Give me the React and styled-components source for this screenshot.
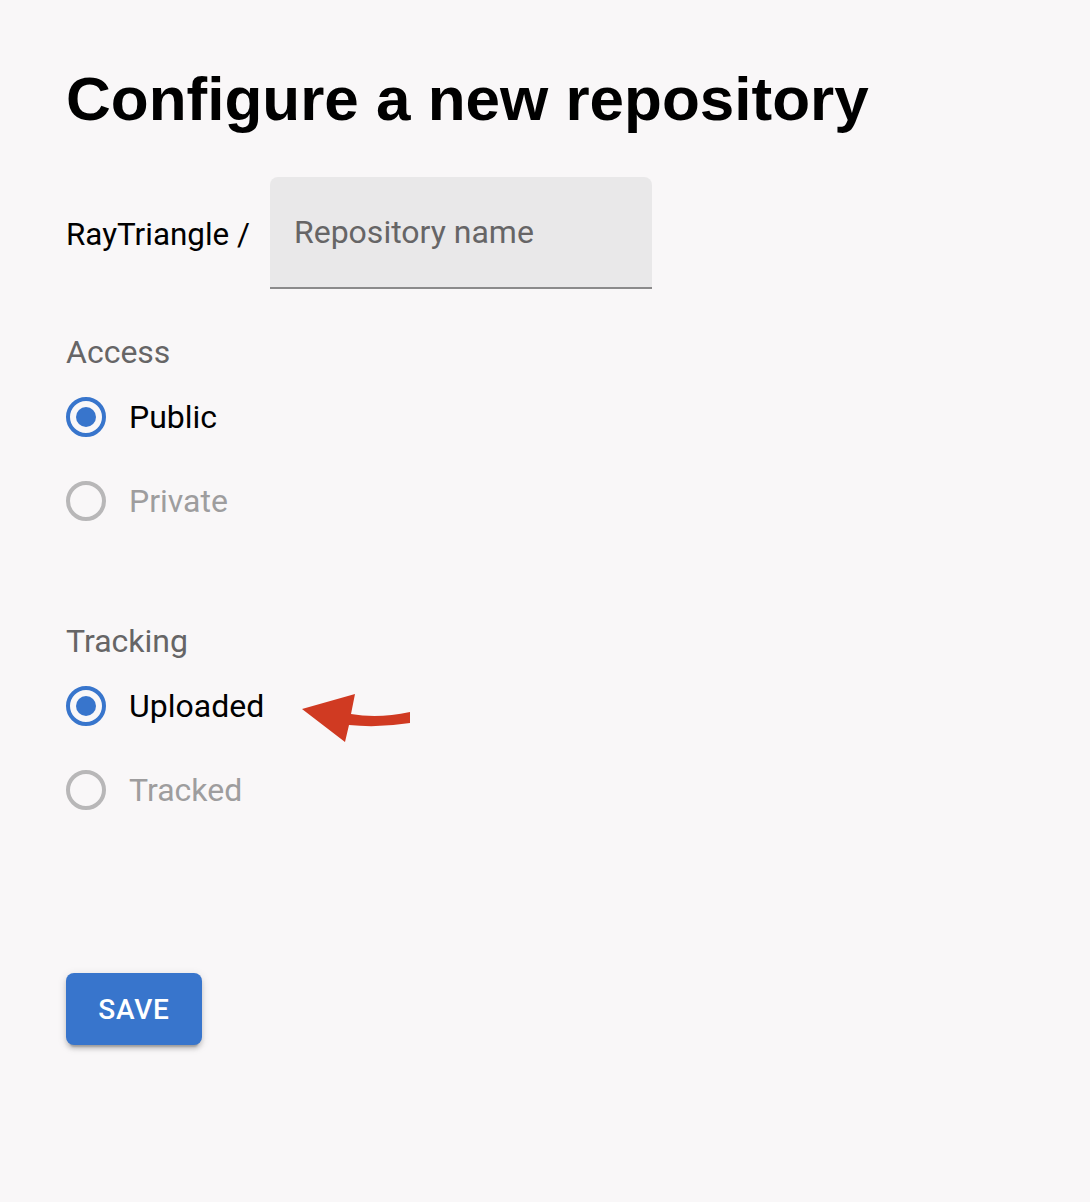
import React, { useState } from 'react';
import styled, { createGlobalStyle } from 'styled-components';

const GlobalStyle = createGlobalStyle`
  html, body {
    margin: 0;
    padding: 0;
    background: #f9f7f8;
  }
  body {
    font-family: Roboto, "Liberation Sans", Arial, sans-serif;
    color: #000;
  }
`;

const Page = styled.div`
  min-height: 1202px;
  padding: 62px 0 0 66px;
  box-sizing: border-box;
  background: #f9f7f8;
`;

const Title = styled.h1`
  margin: 0;
  font-family: "Liberation Sans", Arial, sans-serif;
  font-weight: 700;
  font-size: 62px;
  line-height: 74px;
  color: #000;
`;

const NameRow = styled.div`
  display: flex;
  align-items: center;
  gap: 20px;
  margin-top: 41px;
`;

const Owner = styled.span`
  font-size: 31.4px;
  line-height: 46px;
  color: #000;
  padding-top: 4px;
`;

const FilledField = styled.label`
  width: 382px;
  height: 112px;
  box-sizing: border-box;
  display: flex;
  align-items: center;
  padding: 0 24px;
  background: #e9e8e9;
  border-radius: 8px 8px 0 0;
  border-bottom: 2px solid #8b8a8b;
  cursor: text;

  input {
    width: 100%;
    border: 0;
    outline: 0;
    background: transparent;
    font-family: Roboto, sans-serif;
    font-size: 32px;
    color: #000;
    padding: 0;
  }
  input::placeholder {
    color: #666566;
    opacity: 1;
  }
`;

const Group = styled.fieldset`
  border: 0;
  margin: ${(p) => p.$top}px 0 0;
  padding: 0;
  min-width: 0;
`;

const GroupLabel = styled.legend`
  padding: 0;
  font-size: 32px;
  line-height: 46px;
  color: #666566;
`;

const Option = styled.label`
  position: relative;
  display: flex;
  align-items: center;
  height: 84px;
  gap: 23px;
  font-size: 32px;
  color: ${(p) => (p.$disabled ? '#9e9d9e' : '#000')};
  cursor: ${(p) => (p.$disabled ? 'default' : 'pointer')};

  input {
    display: none;
  }
`;

const Circle = styled.span`
  width: 40px;
  height: 40px;
  box-sizing: border-box;
  border-radius: 50%;
  border: 4px solid
    ${(p) => (p.$disabled ? '#b8b7b8' : p.$checked ? '#3875cc' : '#8b8a8b')};
  display: flex;
  align-items: center;
  justify-content: center;
  flex: none;

  &::after {
    content: '';
    width: 20px;
    height: 20px;
    border-radius: 50%;
    background: #3875cc;
    transform: scale(${(p) => (p.$checked ? 1 : 0)});
  }
`;

const Arrow = styled.svg`
  position: absolute;
  left: 232px;
  top: 26px;
  width: 116px;
  height: 56px;
`;

const SaveButton = styled.button`
  margin-top: 141px;
  width: 136px;
  height: 72px;
  border: 0;
  border-radius: 8px;
  background: #3875cc;
  color: #fff;
  font-family: Roboto, sans-serif;
  font-weight: 500;
  font-size: 28px;
  letter-spacing: 0.8px;
  text-transform: uppercase;
  box-shadow: 0 6px 2px -4px rgba(0, 0, 0, 0.2), 0 4px 4px 0 rgba(0, 0, 0, 0.14),
    0 2px 10px 0 rgba(0, 0, 0, 0.12);
  cursor: pointer;
`;

function RadioOption({ label, value, checked, disabled, onChange, children }) {
  return (
    <Option $disabled={disabled}>
      <input
        type="radio"
        value={value}
        checked={checked}
        disabled={disabled}
        onChange={() => onChange(value)}
      />
      <Circle $checked={checked} $disabled={disabled} />
      {label}
      {children}
    </Option>
  );
}

export default function App() {
  const [name, setName] = useState('');
  const [access, setAccess] = useState('public');
  const [tracking, setTracking] = useState('uploaded');

  return (
    <Page>
      <GlobalStyle />
      <Title>Configure a new repository</Title>

      <NameRow>
        <Owner>RayTriangle /</Owner>
        <FilledField>
          <input
            value={name}
            onChange={(e) => setName(e.target.value)}
            placeholder="Repository name"
          />
        </FilledField>
      </NameRow>

      <Group $top={40}>
        <GroupLabel>Access</GroupLabel>
        <RadioOption label="Public" value="public" checked={access === 'public'} onChange={setAccess} />
        <RadioOption label="Private" value="private" checked={access === 'private'} disabled onChange={setAccess} />
      </Group>

      <Group $top={75}>
        <GroupLabel>Tracking</GroupLabel>
        <RadioOption label="Uploaded" value="uploaded" checked={tracking === 'uploaded'} onChange={setTracking}>
          <Arrow viewBox="0 0 116 56">
            <path
              d="M4 19 L57 4 L53 24 Q80 29 112 22 L112 33 Q80 38 51 35 L47 52 Z"
              fill="#d03a22"
            />
          </Arrow>
        </RadioOption>
        <RadioOption label="Tracked" value="tracked" checked={tracking === 'tracked'} disabled onChange={setTracking} />
      </Group>

      <SaveButton type="button">Save</SaveButton>
    </Page>
  );
}
